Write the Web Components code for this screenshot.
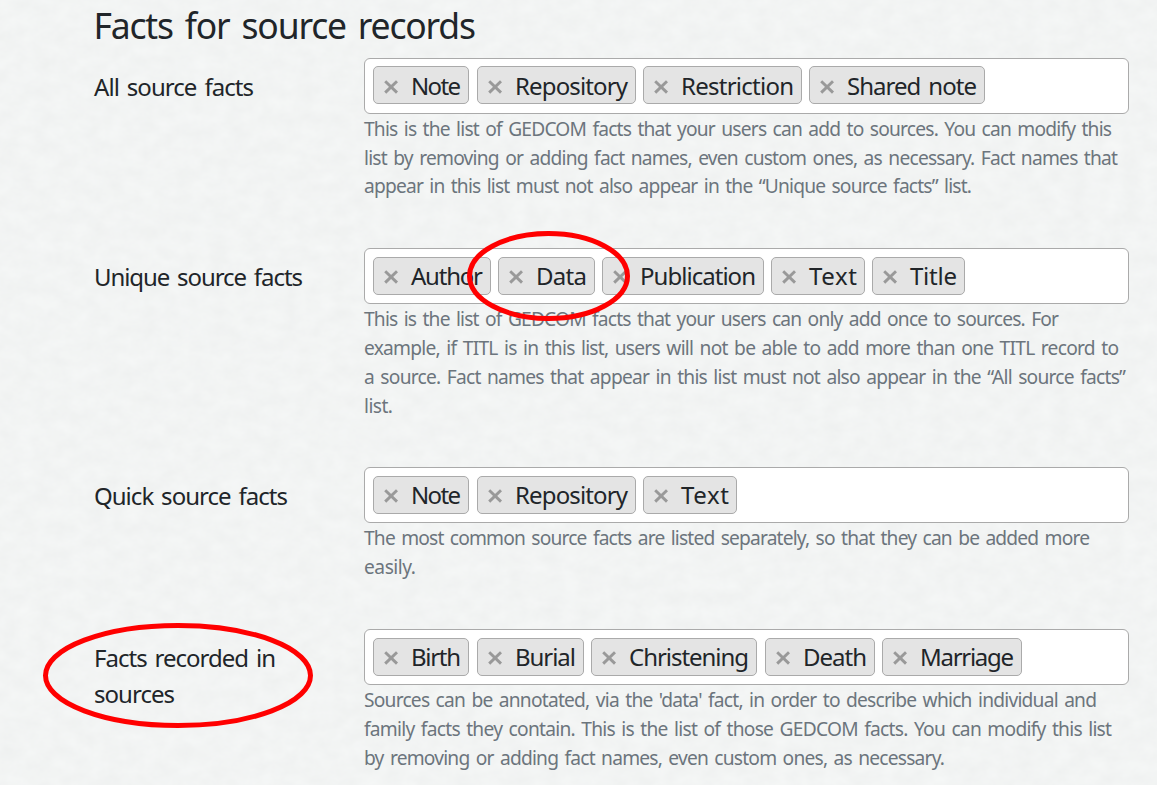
<!DOCTYPE html>
<html lang="en">
<head>
<meta charset="utf-8">
<title>Facts for source records</title>
<style>
html, body { margin: 0; padding: 0; }
body { width: 1157px; height: 785px; overflow: hidden; background: #f2f4f4; }
</style>
</head>
<body>
<facts-page></facts-page>
<script>
/* A single line of text whose tracking is adjusted to a given width. */
customElements.define('fit-line', class extends HTMLElement {
  connectedCallback() {
    const root = this.attachShadow({ mode: 'open' });
    root.innerHTML = `<style>:host{display:block;white-space:nowrap}span{display:inline-block;white-space:pre;word-spacing:0.11em}</style><span></span>`;
    const span = root.querySelector('span');
    span.textContent = this.getAttribute('text');
    const w = parseFloat(this.getAttribute('w'));
    const natural = span.getBoundingClientRect().width;
    span.style.letterSpacing = ((w - natural) / (span.textContent.length - 1)) + 'px';
    this.style.width = w + 'px';
  }
});

customElements.define('fact-tag', class extends HTMLElement {
  connectedCallback() {
    const w = +this.getAttribute('w');
    this.attachShadow({ mode: 'open' }).innerHTML = `<style>
      :host{box-sizing:border-box;display:flex;flex:none;height:38px;width:${w}px;border:1px solid #aaa;border-radius:5px;background:#e4e4e4;line-height:36px;padding:var(--ink-top,1px) 0 0 9px;align-items:flex-start}
      svg{width:16px;height:16px;flex:none;margin:11px 12px 0 0}
      </style><svg viewBox="0 0 16 16"><path d="M2.2 2.2L14 13.6M14 2.2L2.2 13.6" stroke="#999" stroke-width="2.9" fill="none"/></svg><fit-line text="${this.getAttribute('name')}" w="${w - 46}"></fit-line>`;
  }
});

customElements.define('fact-select', class extends HTMLElement {
  connectedCallback() {
    this.attachShadow({ mode: 'open' }).innerHTML = `<style>
      :host{box-sizing:border-box;display:flex;width:765px;height:56px;border:1px solid #aaa;border-radius:6px;background:#fff;padding:var(--tag-top,8px) 0 0 8px}
      </style><slot></slot>`;
  }
});

customElements.define('setting-row', class extends HTMLElement {
  connectedCallback() {
    this.attachShadow({ mode: 'open' }).innerHTML = `<style>
      :host{display:grid;grid-template-columns:270px 765px}
      .label{padding-top:11px;line-height:36px}
      .help{font-size:19.2px;line-height:28.8px;color:#6c757d;padding-top:var(--help-top,1px)}
      </style><div class="label"><slot name="label"></slot></div>
      <div><slot></slot><div class="help"><slot name="help"></slot></div></div>`;
  }
});

customElements.define('paper-texture', class extends HTMLElement {
  connectedCallback() {
    this.attachShadow({ mode: 'open' }).innerHTML = `<style>
      :host{position:absolute;inset:0;z-index:-1}svg{display:block}</style>
      <svg width="1157" height="785"><filter id="n" x="0" y="0" width="100%" height="100%" color-interpolation-filters="sRGB">
      <feTurbulence type="fractalNoise" baseFrequency="0.057 0.071" numOctaves="4" seed="11"/>
      <feColorMatrix values="0.03 0 0 0 0.934  0.03 0 0 0 0.941  0.03 0 0 0 0.939  0 0 0 0 1"/></filter>
      <rect width="1157" height="785" filter="url(#n)"/></svg>`;
  }
});

customElements.define('red-ring', class extends HTMLElement {
  connectedCallback() {
    const [x, y, w, h] = this.getAttribute('box').split(' ').map(Number);
    this.attachShadow({ mode: 'open' }).innerHTML = `<style>
      :host{box-sizing:border-box;position:absolute;left:${x}px;top:${y}px;width:${w}px;height:${h}px;pointer-events:none}
      svg{display:block}</style>
      <svg width="${w}" height="${h}"><ellipse cx="${w/2}" cy="${h/2}" rx="${w/2-2.5}" ry="${h/2-2.5}" fill="none" stroke="#f00" stroke-width="5"/></svg>`;
  }
});

const rows = [
  { h: 190, top: 7, ink: 1, help0: 0.85, label: [['All source facts', 160]],
    tags: [['Note', 96, 8], ['Repository', 159, 7], ['Restriction', 159, 7], ['Shared note', 176, 0]],
    help: [['This is the list of GEDCOM facts that your users can add to sources. You can modify this', 748],
      ['list by removing or adding fact names, even custom ones, as necessary. Fact names that', 754],
      ['appear in this list must not also appear in the “Unique source facts” list.', 608]] },
  { h: 219, top: 8, ink: 0, help0: 1.3, label: [['Unique source facts', 209]],
    tags: [['Author', 118, 7], ['Data', 97, 7], ['Publication', 162, 7], ['Text', 94, 7], ['Title', 93, 0]],
    help: [['This is the list of GEDCOM facts that your users can only add once to sources. For', 695],
      ['example, if TITL is in this list, users will not be able to add more than one TITL record to', 755],
      ['a source. Fact names that appear in this list must not also appear in the “All source facts”', 762],
      ['list.', 29]] },
  { h: 162, top: 8, ink: 0, help0: 1, label: [['Quick source facts', 194]],
    tags: [['Note', 96, 8], ['Repository', 159, 7], ['Text', 94, 0]],
    help: [['The most common source facts are listed separately, so that they can be added more', 726],
      ['easily.', 52]] },
  { h: 156, top: 8, ink: 0, help0: 1, label: [['Facts recorded in', 182], ['sources', 81]],
    tags: [['Birth', 96, 8], ['Burial', 107, 7], ['Christening', 166, 8], ['Death', 110, 7], ['Marriage', 140, 0]],
    help: [["Sources can be annotated, via the 'data' fact, in order to describe which individual and", 733],
      ['family facts they contain. This is the list of those GEDCOM facts. You can modify this list', 748],
      ['by removing or adding fact names, even custom ones, as necessary.', 581]] }
];
const lines = a => a.map(([t, w]) => `<fit-line text="${t}" w="${w}"></fit-line>`).join('');

customElements.define('facts-page', class extends HTMLElement {
  connectedCallback() {
    this.attachShadow({ mode: 'open' }).innerHTML = `<style>
      :host{box-sizing:border-box;display:block;position:relative;z-index:0;width:1157px;height:785px;overflow:hidden;padding-left:94px;font-family:Tahoma,"Noto Sans",sans-serif;font-size:24px;color:#212529}
      h2{margin:0 0 0 -0.5px;height:58px;font-size:35.5px;font-weight:400;line-height:50px;box-sizing:border-box}
      </style><paper-texture></paper-texture>
      <h2><fit-line text="Facts for source records" w="382.5"></fit-line></h2>` +
      rows.map(r => `<setting-row style="height:${r.h}px;--help-top:${r.help0}px;--ink-top:${r.ink}px"><div slot="label">${lines(r.label)}</div>
        <fact-select style="--tag-top:${r.top}px">${r.tags.map(([n, w, g]) => `<fact-tag name="${n}" w="${w}" style="margin-right:${g}px"></fact-tag>`).join('')}</fact-select>
        <div slot="help">${lines(r.help)}</div></setting-row>`).join('') +
      `<red-ring box="467 231 163 90"></red-ring><red-ring box="43 623 270 105"></red-ring>`;
  }
});
</script>
</body>
</html>
